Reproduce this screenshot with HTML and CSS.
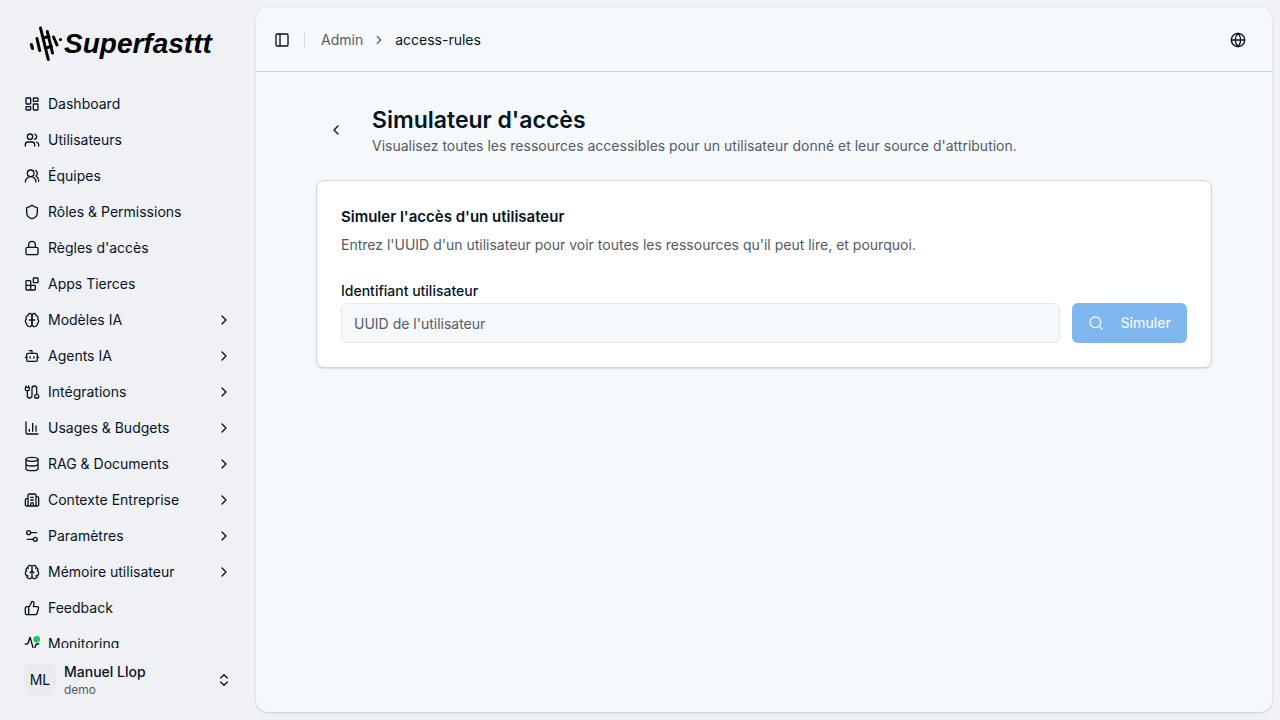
FILE: index.html
```html
<!DOCTYPE html>
<html lang="fr">

<head>
  <meta charset="UTF-8">
  <meta name="viewport" content="width=device-width, initial-scale=1.0">
  <title>Simulateur d'accès</title>
  <link rel="stylesheet" href="styles.css">
</head>

<body>
  <!-- icons -->
  <svg class="sprite" xmlns="http://www.w3.org/2000/svg">
    <symbol id="i-right" viewBox="0 0 24 24"><path d="m9 18 6-6-6-6"/></symbol>
  </svg>

  <div class="layout">
    <aside class="sidebar">
      <a class="logo" href="#">
        <svg class="logo-mark" viewBox="0 0 36 36"><path d="M3.300 18.500l1.300 4M9 12.500l2.700 12M12.500 2l7.800 31.500M19.300 5.500l5.200 21.500M17 11.500l4-1M19.500 21.500l4-1M25.500 11l3.500 8M32.400 13.500l.2 0"/></svg>
        <span class="logo-text">Superfasttt</span>
      </a>
      <nav class="menu">
        <ul>
          <li><a class="item" href="#"><svg class="icon" viewBox="0 0 24 24"><rect width="7" height="9" x="3" y="3" rx="1"/><rect width="7" height="5" x="14" y="3" rx="1"/><rect width="7" height="9" x="14" y="12" rx="1"/><rect width="7" height="5" x="3" y="16" rx="1"/></svg><span>Dashboard</span></a></li>
          <li><a class="item" href="#"><svg class="icon" viewBox="0 0 24 24"><path d="M16 21v-2a4 4 0 0 0-4-4H6a4 4 0 0 0-4 4v2"/><circle cx="9" cy="7" r="4"/><path d="M22 21v-2a4 4 0 0 0-3-3.870M16 3.130a4 4 0 0 1 0 7.750"/></svg><span>Utilisateurs</span></a></li>
          <li><a class="item" href="#"><svg class="icon" viewBox="0 0 24 24"><path d="M18 21a8 8 0 0 0-16 0"/><circle cx="10" cy="8" r="5"/><path d="M22 20c0-3.370-2-6.500-4-8a5 5 0 0 0-.450-8.300"/></svg><span>Équipes</span></a></li>
          <li><a class="item" href="#"><svg class="icon" viewBox="0 0 24 24"><path d="M20 13c0 5-3.500 7.500-7.660 8.950a1 1 0 0 1-.670-.010C7.500 20.500 4 18 4 13V6a1 1 0 0 1 1-1c2 0 4.500-1.200 6.240-2.720a1.170 1.170 0 0 1 1.520 0C14.510 3.810 17 5 19 5a1 1 0 0 1 1 1z"/></svg><span>Rôles &amp; Permissions</span></a></li>
          <li><a class="item" href="#"><svg class="icon" viewBox="0 0 24 24"><rect width="18" height="11" x="3" y="11" rx="2"/><path d="M7 11V7a5 5 0 0 1 10 0v4"/></svg><span>Règles d'accès</span></a></li>
          <li><a class="item" href="#"><svg class="icon" viewBox="0 0 24 24"><rect width="7" height="7" x="14" y="3" rx="1"/><path d="M10 21V8a1 1 0 0 0-1-1H4a1 1 0 0 0-1 1v12a1 1 0 0 0 1 1h12a1 1 0 0 0 1-1v-5a1 1 0 0 0-1-1H3"/></svg><span>Apps Tierces</span></a></li>
          <li><a class="item" href="#"><svg class="icon" viewBox="0 0 24 24"><path d="M12 5a3 3 0 1 0-5.997.125 4 4 0 0 0-2.526 5.770 4 4 0 0 0 .556 6.588A4 4 0 1 0 12 18Z"/><path d="M12 5a3 3 0 1 1 5.997.125 4 4 0 0 1 2.526 5.770 4 4 0 0 1-.556 6.588A4 4 0 1 1 12 18Z"/><path d="M8 12h8"/></svg><span>Modèles IA</span><svg class="icon chevron"><use href="#i-right"/></svg></a></li>
          <li><a class="item" href="#"><svg class="icon" viewBox="0 0 24 24"><path d="M12 8V4H8"/><rect width="16" height="12" x="4" y="8" rx="2"/><path d="M2 14h2M20 14h2M15 13v2M9 13v2"/></svg><span>Agents IA</span><svg class="icon chevron"><use href="#i-right"/></svg></a></li>
          <li><a class="item" href="#"><svg class="icon" viewBox="0 0 24 24"><path d="M17 21a1 1 0 0 1-1-1v-2a2 2 0 0 1 2-2h2a2 2 0 0 1 2 2v2a1 1 0 0 1-1 1zM19 16V6.500a3.500 3.500 0 0 0-7 0v11a3.500 3.500 0 0 1-7 0V10M3 5V3M4 10a2 2 0 0 1-2-2V6a1 1 0 0 1 1-1h4a1 1 0 0 1 1 1v2a2 2 0 0 1-2 2zM7 5V3"/></svg><span>Intégrations</span><svg class="icon chevron"><use href="#i-right"/></svg></a></li>
          <li><a class="item" href="#"><svg class="icon" viewBox="0 0 24 24"><path d="M3 3v16a2 2 0 0 0 2 2h16M18 17V9M13 17V5M8 17v-3"/></svg><span>Usages &amp; Budgets</span><svg class="icon chevron"><use href="#i-right"/></svg></a></li>
          <li><a class="item" href="#"><svg class="icon" viewBox="0 0 24 24"><ellipse cx="12" cy="5" rx="9" ry="3"/><path d="M3 5v14a9 3 0 0 0 18 0V5M3 12a9 3 0 0 0 18 0"/></svg><span>RAG &amp; Documents</span><svg class="icon chevron"><use href="#i-right"/></svg></a></li>
          <li><a class="item" href="#"><svg class="icon" viewBox="0 0 24 24"><path d="M10 12h4M10 8h4M14 21v-3a2 2 0 0 0-4 0v3M6 10H4a2 2 0 0 0-2 2v7a2 2 0 0 0 2 2h16a2 2 0 0 0 2-2V9a2 2 0 0 0-2-2h-2M6 21V5a2 2 0 0 1 2-2h8a2 2 0 0 1 2 2v16"/></svg><span>Contexte Entreprise</span><svg class="icon chevron"><use href="#i-right"/></svg></a></li>
          <li><a class="item" href="#"><svg class="icon" viewBox="0 0 24 24"><path d="M19 7h-9M14 17H5"/><circle cx="17" cy="17" r="3"/><circle cx="7" cy="7" r="3"/></svg><span>Paramètres</span><svg class="icon chevron"><use href="#i-right"/></svg></a></li>
          <li><a class="item" href="#"><svg class="icon" viewBox="0 0 24 24"><path d="M12 18V5M15 13a4.170 4.170 0 0 1-3-4 4.170 4.170 0 0 1-3 4M17.598 6.500A3 3 0 1 0 12 5a3 3 0 1 0-5.598 1.500M17.997 5.125a4 4 0 0 1 2.526 5.770M18 18a4 4 0 0 0 2-7.464M19.967 17.483A4 4 0 1 1 12 18a4 4 0 1 1-7.967-.517M6 18a4 4 0 0 1-2-7.464M6.003 5.125a4 4 0 0 0-2.526 5.770"/></svg><span>Mémoire utilisateur</span><svg class="icon chevron"><use href="#i-right"/></svg></a></li>
          <li><a class="item" href="#"><svg class="icon" viewBox="0 0 24 24"><path d="M7 10v12M15 5.880 14 10h5.830a2 2 0 0 1 1.920 2.560l-2.330 8A2 2 0 0 1 17.500 22H4a2 2 0 0 1-2-2v-8a2 2 0 0 1 2-2h2.760a2 2 0 0 0 1.790-1.110L12 2a3.130 3.130 0 0 1 3 3.880Z"/></svg><span>Feedback</span></a></li>
          <li><a class="item" href="#"><svg class="icon" viewBox="0 0 24 24"><path d="M22 12h-2.480a2 2 0 0 0-1.930 1.460l-2.350 8.360a.250.250 0 0 1-.480 0L9.240 2.180a.250.250 0 0 0-.480 0l-2.350 8.360A2 2 0 0 1 4.490 12H2"/><circle class="status" cx="19" cy="5" r="5"/></svg><span>Monitoring</span></a></li>
        </ul>
      </nav>
      <button class="user" type="button">
        <span class="avatar">ML</span>
        <span class="user-info">
          <span class="user-name">Manuel Llop</span>
          <span class="user-org">demo</span>
        </span>
        <svg class="icon" viewBox="0 0 24 24"><path d="m7 15 5 5 5-5M7 9l5-5 5 5"/></svg>
      </button>
    </aside>

    <main class="main">
      <header class="topbar">
        <button class="icon-btn" type="button" aria-label="Menu"><svg class="icon" viewBox="0 0 24 24"><rect width="18" height="18" x="3" y="3" rx="2"/><path d="M9 3v18"/></svg></button>
        <span class="separator"></span>
        <nav class="breadcrumb">
          <a href="#">Admin</a>
          <svg class="icon icon-sm" viewBox="0 0 24 24"><path d="m9 18 6-6-6-6"/></svg>
          <span class="current">access-rules</span>
        </nav>
        <button class="icon-btn lang" type="button" aria-label="Langue"><svg class="icon" viewBox="0 0 24 24"><circle cx="12" cy="12" r="10"/><path d="M12 2a14.500 14.500 0 0 0 0 20 14.500 14.500 0 0 0 0-20M2 12h20"/></svg></button>
      </header>

      <div class="content">
        <div class="page-head">
          <a class="back" href="#" aria-label="Retour"><svg class="icon" viewBox="0 0 24 24"><path d="m15 18-6-6 6-6"/></svg></a>
          <div>
            <h1>Simulateur d'accès</h1>
            <p class="muted">Visualisez toutes les ressources accessibles pour un utilisateur donné et leur source d'attribution.</p>
          </div>
        </div>

        <section class="card">
          <h2>Simuler l'accès d'un utilisateur</h2>
          <p class="muted">Entrez l'UUID d'un utilisateur pour voir toutes les ressources qu'il peut lire, et pourquoi.</p>
          <form class="form">
            <div class="field">
              <label for="uuid">Identifiant utilisateur</label>
              <input id="uuid" type="text" placeholder="UUID de l'utilisateur">
            </div>
            <button class="submit" type="submit" disabled>
              <svg class="icon" viewBox="0 0 24 24"><circle cx="11" cy="11" r="8"/><path d="m21 21-4.300-4.300"/></svg>
              <span>Simuler</span>
            </button>
          </form>
        </section>
      </div>
    </main>
  </div>
</body>

</html>
```
FILE: styles.css
```css
* {
  box-sizing: border-box;
}

body {
  margin: 0;
  font-family: Inter, "Liberation Sans", sans-serif;
  font-size: 14px;
  line-height: 20px;
  color: #06141f;
  background-color: #eff1f5;
}

h1,
h2,
p,
ul {
  margin: 0;
  padding: 0;
}

ul {
  list-style: none;
}

a {
  color: inherit;
  text-decoration: none;
}

button,
input {
  font: inherit;
  color: inherit;
}

.sprite {
  display: none;
}

.icon {
  width: 16px;
  height: 16px;
  flex-shrink: 0;
  fill: none;
  stroke: currentColor;
  stroke-width: 2;
  stroke-linecap: round;
  stroke-linejoin: round;
}

.icon-sm {
  width: 14px;
  height: 14px;
}

.layout {
  display: flex;
  height: 100vh;
}

/* sidebar */
.sidebar {
  width: 256px;
  flex-shrink: 0;
  display: flex;
  flex-direction: column;
  padding: 8px;
}

.logo {
  display: flex;
  align-items: center;
  height: 72px;
  padding: 0 20px;
  color: #000;
}

.logo-mark {
  width: 36px;
  height: 36px;
  flex-shrink: 0;
  fill: none;
  stroke: currentColor;
  stroke-width: 3;
  stroke-linecap: round;
}

.logo-text {
  font-family: "Liberation Sans", Arial, sans-serif;
  font-size: 28px;
  line-height: 36px;
  font-weight: 700;
  font-style: italic;
}

.menu {
  flex: 1;
  min-height: 0;
  overflow-y: auto;
  scrollbar-width: none;
  padding: 8px;
}

.menu ul {
  display: flex;
  flex-direction: column;
  gap: 4px;
}

.item {
  display: flex;
  align-items: center;
  gap: 8px;
  height: 32px;
  padding: 0 8px;
}

.chevron {
  margin-left: auto;
}

.status {
  fill: #22c55e;
  stroke: none;
}

.user {
  display: flex;
  align-items: center;
  gap: 8px;
  height: 48px;
  margin: 8px;
  padding: 0 8px;
  border: 0;
  background: none;
  text-align: left;
}

.avatar {
  width: 32px;
  height: 32px;
  border-radius: 8px;
  background-color: #e9ebef;
  line-height: 32px;
  text-align: center;
}

.user-info {
  flex: 1;
  display: flex;
  flex-direction: column;
}

.user-name {
  line-height: 20px;
  font-weight: 500;
}

.user-org {
  font-size: 12px;
  line-height: 16px;
  color: #555b62;
}

/* main */
.main {
  flex: 1;
  min-width: 0;
  margin: 8px 8px 8px 0;
  border-radius: 12px;
  background-color: #f5f9fc;
  box-shadow: 0 1px 3px rgba(0, 0, 0, .1), 0 1px 2px rgba(0, 0, 0, .06);
}

.topbar {
  display: flex;
  align-items: center;
  height: 64px;
  padding: 0 20px 0 12px;
  border-bottom: 1px solid #cfd6da;
}

.icon-btn {
  display: flex;
  align-items: center;
  justify-content: center;
  width: 28px;
  height: 28px;
  padding: 0;
  border: 0;
  background: none;
}

.separator {
  width: 1px;
  height: 16px;
  margin: 0 16px 0 8px;
  background-color: #d2d8dc;
}

.breadcrumb {
  display: flex;
  align-items: center;
  gap: 9px;
  color: #555b62;
}

.current {
  color: #06141f;
}

.lang {
  margin-left: auto;
}

.content {
  padding: 32px 60px;
}

.page-head {
  display: flex;
  align-items: center;
  gap: 16px;
  margin-bottom: 24px;
}

.back {
  display: flex;
  align-items: center;
  justify-content: center;
  width: 40px;
  height: 40px;
}

.muted {
  color: #555b62;
}

h1 {
  font-size: 23px;
  line-height: 32px;
  font-weight: 600;
}

.card {
  padding: 24px;
  border: 1px solid #cfd6da;
  border-radius: 8px;
  background-color: #fff;
  box-shadow: 0 1px 2px rgba(0, 0, 0, .1);
}

h2 {
  margin-bottom: 6px;
  font-size: 15px;
  line-height: 24px;
  font-weight: 600;
}

.form {
  display: flex;
  align-items: flex-end;
  gap: 12px;
  margin-top: 24px;
}

.field {
  flex: 1;
}

.field label {
  display: block;
  line-height: 24px;
  font-weight: 500;
}

.field input {
  display: block;
  width: 100%;
  height: 40px;
  padding: 0 12px;
  border: 1px solid #e5eaee;
  border-radius: 6px;
  background-color: #f5f9fc;
}

.field input::placeholder {
  color: #555b62;
}

.submit {
  display: flex;
  align-items: center;
  gap: 16px;
  height: 40px;
  padding: 0 16px;
  border: 0;
  border-radius: 6px;
  background-color: #80b6ee;
  color: #f1f8ff;
  font-weight: 500;
}
```
